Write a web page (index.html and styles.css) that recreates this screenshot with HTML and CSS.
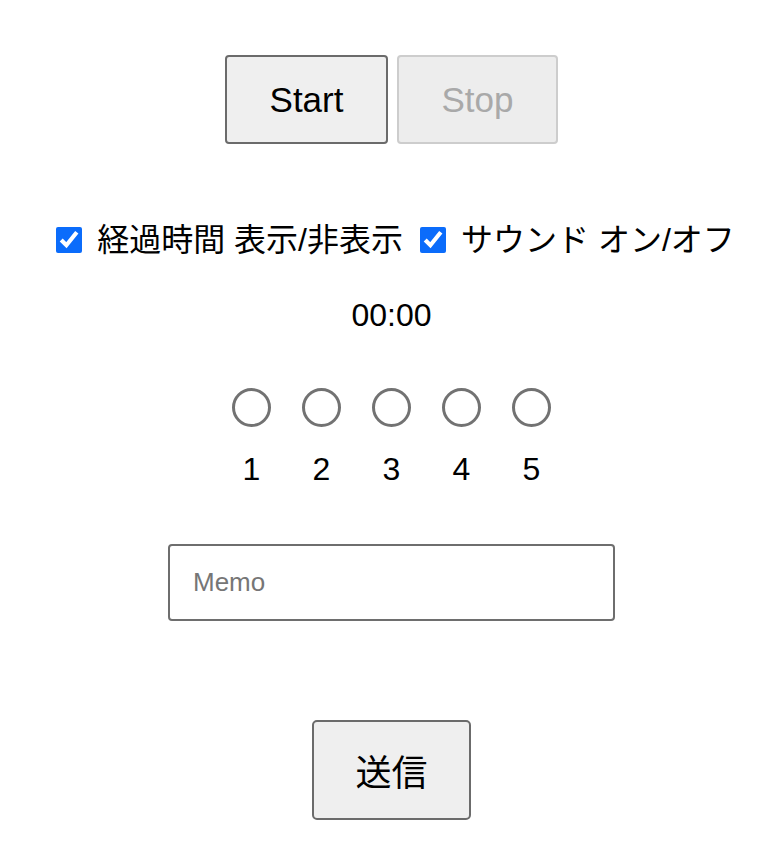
FILE: index.html
```html
<!DOCTYPE html>
<html lang="ja">
<head>
<meta charset="utf-8">
<title>Timer</title>
<link rel="stylesheet" href="styles.css">
</head>
<body>
<div class="page">
  <div class="controls">
    <button class="btn btn-start" type="button">Start</button>
    <button class="btn btn-stop" type="button" disabled>Stop</button>
  </div>

  <div class="options">
    <label class="opt"><input type="checkbox" class="cb" checked><span>経過時間 表示/非表示</span></label>
    <label class="opt"><input type="checkbox" class="cb" checked><span>サウンド オン/オフ</span></label>
  </div>

  <div class="time">00:00</div>

  <div class="rating">
    <label class="rate"><input type="radio" name="r" class="radio"><span>1</span></label>
    <label class="rate"><input type="radio" name="r" class="radio"><span>2</span></label>
    <label class="rate"><input type="radio" name="r" class="radio"><span>3</span></label>
    <label class="rate"><input type="radio" name="r" class="radio"><span>4</span></label>
    <label class="rate"><input type="radio" name="r" class="radio"><span>5</span></label>
  </div>

  <input class="memo" type="text" placeholder="Memo">

  <button class="btn btn-submit" type="button">送信</button>
</div>
</body>
</html>
```

FILE: styles.css
```css
html, body {
  margin: 0;
  padding: 0;
  background: #ffffff;
}

body {
  font-family: "Liberation Sans", "Noto Sans CJK JP", Arial, sans-serif;
  color: #000;
}

.page {
  display: flex;
  flex-direction: column;
  align-items: center;
  padding-left: 9px;
}

.controls {
  display: flex;
  gap: 9px;
  margin-top: 55px;
}

.btn {
  box-sizing: border-box;
  font-family: "Liberation Sans", "Noto Sans CJK JP", sans-serif;
  background: #efefef;
  border: 2px solid #6b6b6b;
  border-radius: 4px;
  color: #000;
  padding: 0;
  margin: 0;
}

.btn-start {
  width: 163px;
  height: 89px;
  font-size: 35px;
}

.btn-stop {
  width: 161px;
  height: 89px;
  font-size: 35px;
  border-color: #cdcdcd;
  color: #a9a9a9;
  background: #ededed;
}

.options {
  display: flex;
  gap: 17px;
  margin-top: 76px;
  margin-left: 8px;
  font-size: 32px;
  line-height: 40px;
  height: 40px;
}

.opt {
  display: flex;
  align-items: center;
  gap: 15px;
  white-space: nowrap;
}

.cb {
  width: 26px;
  height: 26px;
  margin: 0;
  accent-color: #0b6cfb;
}

.time {
  margin-top: 35px;
  font-size: 32px;
  line-height: 40px;
}

.rating {
  display: flex;
  margin-top: 53px;
}

.rate {
  width: 70px;
  display: flex;
  flex-direction: column;
  align-items: center;
  gap: 22px;
  font-size: 32px;
  line-height: 40px;
}

.radio {
  appearance: none;
  -webkit-appearance: none;
  box-sizing: border-box;
  width: 39px;
  height: 39px;
  margin: 0;
  border: 3px solid #727272;
  border-radius: 50%;
  background: #fff;
}

.memo {
  box-sizing: border-box;
  width: 447px;
  height: 77px;
  margin-top: 55px;
  padding: 0 0 0 23px;
  border: 2px solid #6e6e6e;
  border-radius: 4px;
  font-family: "Liberation Sans", sans-serif;
  font-size: 26px;
  outline: none;
}

.memo::placeholder {
  color: #767676;
}

.btn-submit {
  width: 159px;
  height: 100px;
  margin-top: 99px;
  font-size: 36px;
  border-radius: 5px;
}
```
